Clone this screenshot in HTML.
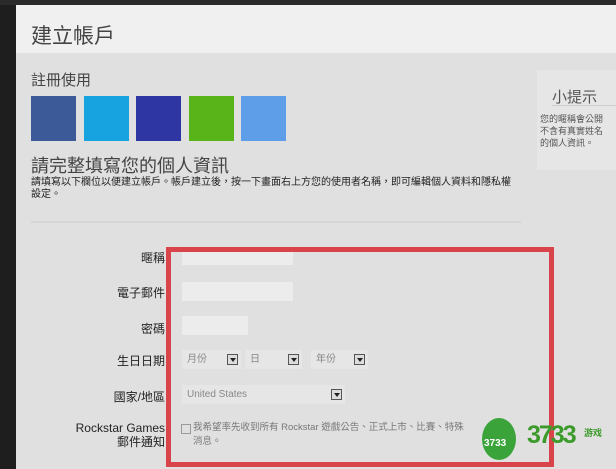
<html><head><style>
body{margin:0;width:616px;height:469px;background:#1e1e1e;position:relative;overflow:hidden;font-family:"Liberation Sans","Noto Sans CJK TC",sans-serif}
.a{position:absolute}
.inp{position:absolute;background:#ececec}
.lbl{position:absolute;right:451px;font-size:12px;color:#222;text-align:right;white-space:nowrap}
.sel{position:absolute;background:#e6e6e6;height:19px;font-size:10px;color:#888;line-height:19px;padding-left:5px;box-sizing:border-box}
.arr{position:absolute;right:3px;top:4px;width:11px;height:11px;border:1px solid #555;background:#ddd;box-sizing:border-box}
.arr:after{content:"";position:absolute;left:2px;top:3px;border-left:3px solid transparent;border-right:3px solid transparent;border-top:4px solid #222}
</style></head><body>
<div class="a" style="left:0;top:0;width:616px;height:5px;background:#2a2a2a"></div>
<div class="a" style="left:16px;top:5px;width:600px;height:464px;background:#e0e0e0"></div>
<div class="a" style="left:16px;top:5px;width:600px;height:48px;background:#f0f0f0"></div>
<div class="a" style="left:31px;top:20px;font-size:21px;color:#444">建立帳戶</div>
<div class="a" style="left:31px;top:69px;font-size:15px;color:#444">註冊使用</div>
<div class="a" style="left:31px;top:96px;width:45px;height:45px;background:#3c5a97"></div>
<div class="a" style="left:84px;top:96px;width:45px;height:45px;background:#17a3df"></div>
<div class="a" style="left:136px;top:96px;width:45px;height:45px;background:#2d36a2"></div>
<div class="a" style="left:189px;top:96px;width:45px;height:45px;background:#58b419"></div>
<div class="a" style="left:241px;top:96px;width:45px;height:45px;background:#5e9de8"></div>
<div class="a" style="left:31px;top:152px;font-size:18px;color:#444">請完整填寫您的個人資訊</div>
<div class="a" style="left:31px;top:177px;width:484px;font-size:10px;line-height:12px;color:#222">請填寫以下欄位以便建立帳戶。帳戶建立後，按一下畫面右上方您的使用者名稱，即可編輯個人資料和隱私權設定。</div>
<div class="a" style="left:31px;top:221px;width:490px;height:2px;background:#d6d6d6"></div>
<div class="a" style="left:537px;top:70px;width:79px;height:100px;background:#e6e6e6"></div>
<div class="a" style="left:552px;top:86px;font-size:15px;color:#555">小提示</div>
<div class="a" style="left:552px;top:105px;width:64px;height:1px;background:#ccc"></div>
<div class="a" style="left:540px;top:113px;font-size:9px;line-height:12px;color:#555;white-space:nowrap">您的暱稱會公開<br>不含有真實姓名<br>的個人資訊。</div>
<div class="lbl" style="top:249px">暱稱</div>
<div class="lbl" style="top:284px">電子郵件</div>
<div class="lbl" style="top:320px">密碼</div>
<div class="lbl" style="top:352px">生日日期</div>
<div class="lbl" style="top:388px">國家/地區</div>
<div class="lbl" style="top:421px;line-height:14px">Rockstar Games<br>郵件通知</div>
<div class="inp" style="left:182px;top:250px;width:111px;height:15px"></div>
<div class="inp" style="left:182px;top:282px;width:111px;height:19px"></div>
<div class="inp" style="left:182px;top:316px;width:66px;height:19px"></div>
<div class="sel" style="left:182px;top:350px;width:59px">月份<div class="arr"></div></div>
<div class="sel" style="left:245px;top:350px;width:57px">日<div class="arr"></div></div>
<div class="sel" style="left:311px;top:350px;width:57px">年份<div class="arr"></div></div>
<div class="sel" style="left:182px;top:385px;width:163px">United States<div class="arr"></div></div>
<div class="a" style="left:181px;top:424px;width:8px;height:8px;border:1px solid #999"></div>
<div class="a" style="left:193px;top:421px;font-size:9.5px;line-height:14px;color:#777;white-space:nowrap">我希望率先收到所有 Rockstar 遊戲公告、正式上市、比賽、特殊<br>消息。</div>
<div class="a" style="left:166px;top:247px;width:378px;height:210px;border:5px solid #d9434a"></div>
<div class="a" style="left:482px;top:418px;width:34px;height:42px;border-radius:50%;background:#3aa43a"></div>
<div class="a" style="left:484px;top:438px;font-size:10px;color:#fff;font-weight:bold">3733</div>
<div class="a" style="left:527px;top:421px;font-size:25px;color:#3a9a2a;font-weight:bold;letter-spacing:-2px">3733</div>
<div class="a" style="left:584px;top:426px;font-size:9px;color:#3a9a2a;font-weight:bold">游戏</div>
</body></html>
